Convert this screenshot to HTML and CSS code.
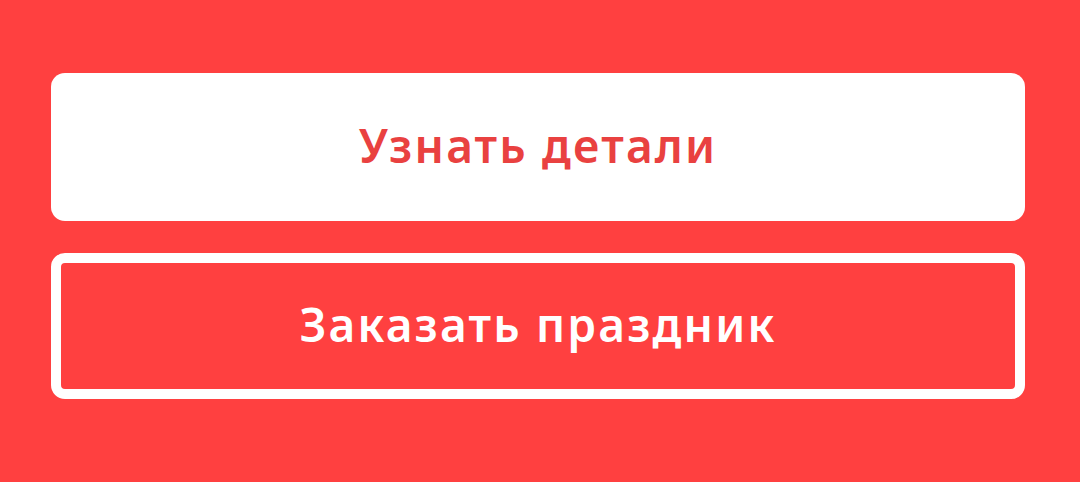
FILE: index.html
```html
<!DOCTYPE html>
<html lang="ru">
<head>
<meta charset="utf-8">
<title>Праздник</title>
<link rel="stylesheet" href="styles.css">
</head>
<body>
  <div class="actions">
    <a class="btn btn-light" href="#">Узнать детали</a>
    <a class="btn btn-outline" href="#">Заказать праздник</a>
  </div>
</body>
</html>
```
FILE: styles.css
```css
html, body {
  margin: 0;
  height: 100%;
}

body {
  background: #ff4040;
  font-family: "Noto Sans", "Open Sans", sans-serif;
}

.actions {
  display: flex;
  flex-direction: column;
  gap: 32px;
  width: 974px;
  padding: 73px 0 0 51px;
}

.btn {
  box-sizing: border-box;
  display: flex;
  align-items: center;
  justify-content: center;
  height: 148px;
  border-radius: 14px;
  font-size: 46px;
  font-weight: 600;
  letter-spacing: 2.2px;
  text-decoration: none;
  padding-bottom: 4px;
}

.btn-light {
  background: #ffffff;
  color: #e94140;
}

.btn-outline {
  height: 146px;
  border: 10px solid #ffffff;
  color: #ffffff;
  background: transparent;
}
```
